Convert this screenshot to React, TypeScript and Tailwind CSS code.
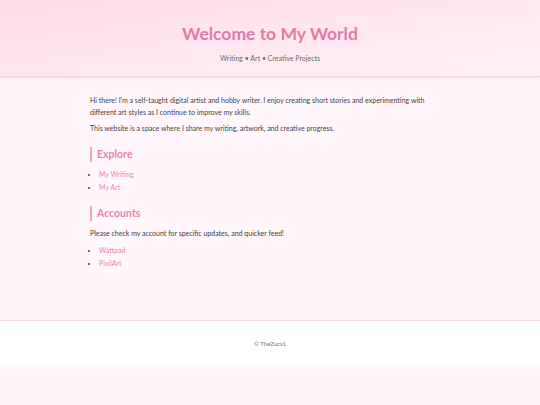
import React from "react";

export default function App() {
  const font = { fontFamily: "Lato, 'Open Sans', sans-serif" };
  return (
    <div className="min-h-[405px] bg-[#fff7fb] text-[#3f3f3f]" style={font}>
      <header className="h-[77px] bg-gradient-to-br from-[#ffdce8] to-[#fff1f7] border-b border-[#f3d3e0] shadow-[0_1px_2px_rgba(230,160,190,0.35)] flex flex-col items-center pt-[22px]">
        <h1 className="text-[17.5px] leading-[24px] font-bold text-[#e27ba6]">Welcome to My World</h1>
        <p className="mt-[7px] text-[7px] leading-[10px] text-[#6a6a6a]">Writing • Art • Creative Projects</p>
      </header>
      <main className="w-[360px] mx-auto pt-[18px] pb-[24px] text-[7px] leading-[11.5px]">
        <p>Hi there! I'm a self-taught digital artist and hobby writer. I enjoy creating short stories and experimenting with different art styles as I continue to improve my skills.</p>
        <p className="mt-[5px]">This website is a space where I share my writing, artwork, and creative progress.</p>
        <h2 className="mt-[12px] border-l-[2px] border-[#f0a3c2] pl-[5px] text-[10.5px] leading-[15px] font-bold text-[#e884ad]">Explore</h2>
        <ul className="mt-[6px] list-disc pl-[9px]">
          <li className="leading-[13px]"><a className="text-[#e884ad]">My Writing</a></li>
          <li className="leading-[13px]"><a className="text-[#e884ad]">My Art</a></li>
        </ul>
        <h2 className="mt-[12px] border-l-[2px] border-[#f0a3c2] pl-[5px] text-[10.5px] leading-[15px] font-bold text-[#e884ad]">Accounts</h2>
        <p className="mt-[7px]">Please check my account for specific updates, and quicker feed!</p>
        <ul className="mt-[5px] list-disc pl-[9px]">
          <li className="leading-[13px]"><a className="text-[#e884ad]">Wattpad</a></li>
          <li className="leading-[13px]"><a className="text-[#e884ad]">PixilArt</a></li>
        </ul>
      </main>
      <div className="h-[26px]" />
      <footer className="h-[45px] bg-white border-t border-[#f6d6e3] flex items-center justify-center">
        <span className="text-[6px] text-[#777]">© TheZaza1</span>
      </footer>
    </div>
  );
}
